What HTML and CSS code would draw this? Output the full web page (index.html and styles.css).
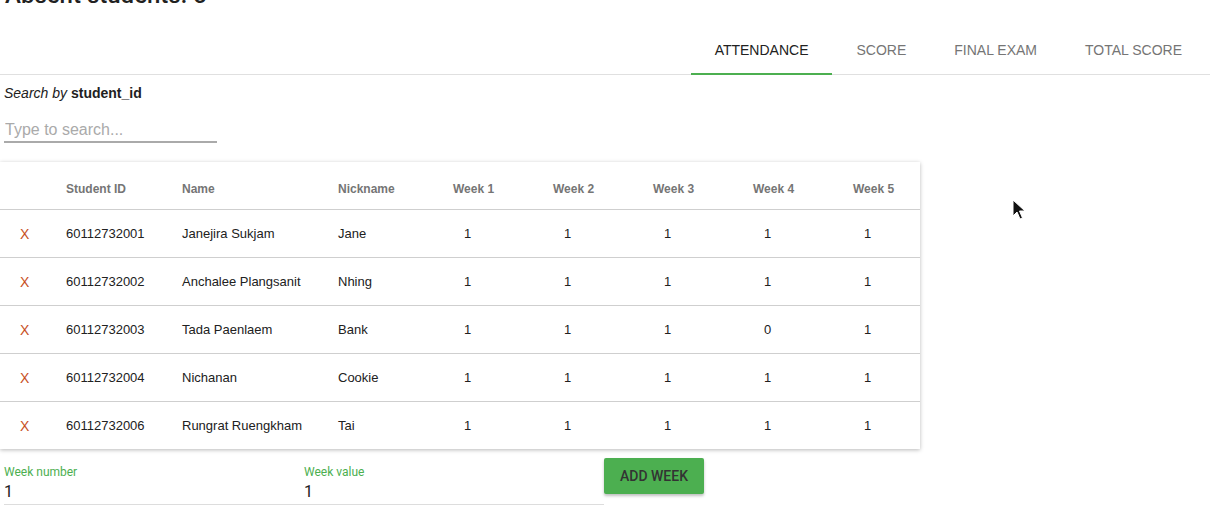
FILE: index.html
```html
<!DOCTYPE html>
<html>
<head>
<meta charset="utf-8">
<link rel="stylesheet" href="styles.css">
</head>
<body>
<h1 class="title">Absent students: 5</h1>
<nav class="tabs">
  <a class="tab active">Attendance</a>
  <a class="tab">Score</a>
  <a class="tab">Final exam</a>
  <a class="tab">Total score</a>
</nav>
<div class="search">
  <div class="search-label"><em>Search by</em> <strong>student_id</strong></div>
  <input class="search-input" type="text" placeholder="Type to search...">
</div>
<div class="card">
  <table class="grid">
    <colgroup>
      <col class="c-del"><col class="c-id"><col class="c-name"><col class="c-nick">
      <col class="c-wk"><col class="c-wk"><col class="c-wk"><col class="c-wk"><col class="c-wk5">
    </colgroup>
    <thead>
      <tr><th></th><th>Student ID</th><th>Name</th><th>Nickname</th><th class="wk">Week 1</th><th class="wk">Week 2</th><th class="wk">Week 3</th><th class="wk">Week 4</th><th class="wk">Week 5</th></tr>
    </thead>
    <tbody>
      <tr><td class="del">X</td><td>60112732001</td><td>Janejira Sukjam</td><td>Jane</td><td class="wk">1</td><td class="wk">1</td><td class="wk">1</td><td class="wk">1</td><td class="wk">1</td></tr>
      <tr><td class="del">X</td><td>60112732002</td><td>Anchalee Plangsanit</td><td>Nhing</td><td class="wk">1</td><td class="wk">1</td><td class="wk">1</td><td class="wk">1</td><td class="wk">1</td></tr>
      <tr><td class="del">X</td><td>60112732003</td><td>Tada Paenlaem</td><td>Bank</td><td class="wk">1</td><td class="wk">1</td><td class="wk">1</td><td class="wk">0</td><td class="wk">1</td></tr>
      <tr><td class="del">X</td><td>60112732004</td><td>Nichanan</td><td>Cookie</td><td class="wk">1</td><td class="wk">1</td><td class="wk">1</td><td class="wk">1</td><td class="wk">1</td></tr>
      <tr><td class="del">X</td><td>60112732006</td><td>Rungrat Ruengkham</td><td>Tai</td><td class="wk">1</td><td class="wk">1</td><td class="wk">1</td><td class="wk">1</td><td class="wk">1</td></tr>
    </tbody>
  </table>
</div>
<div class="form">
  <label class="field">
    <span class="field-label">Week number</span>
    <input class="field-input" type="text" value="1">
  </label>
  <label class="field">
    <span class="field-label">Week value</span>
    <input class="field-input" type="text" value="1">
  </label>
  <button class="btn">Add week</button>
</div>
<svg class="cursor" width="14" height="22" viewBox="0 0 14 22">
  <path d="M1 1 L1 17 L5 13 L8 20 L10.5 19 L7.5 12 L13 12 Z" fill="#111" stroke="#fff" stroke-width="1"/>
</svg>
</body>
</html>
```

FILE: styles.css
```css
html, body {
  margin: 0;
  padding: 0;
  background: #fff;
  font-family: "Liberation Sans", Arial, sans-serif;
  color: #212121;
  overflow: hidden;
}
body {
  position: relative;
  width: 1210px;
  height: 525px;
}
.title {
  margin: -21px 0 0 5px;
  font-family: Roboto, "Liberation Sans", sans-serif;
  font-weight: 500;
  font-size: 24px;
  line-height: 32px;
  height: 47px;
  color: #212121;
}
.tabs {
  display: flex;
  justify-content: flex-end;
  height: 48px;
  border-bottom: 1px solid #e0e0e0;
  padding-right: 4px;
}
.tab {
  display: flex;
  align-items: center;
  padding: 0 24px;
  font-size: 14px;
  text-transform: uppercase;
  color: #757575;
  cursor: pointer;
  border-bottom: 2px solid transparent;
  margin-bottom: -1px;
}
.tab.active {
  color: #212121;
  border-bottom-color: #4caf50;
}
.search {
  padding: 8px 0 0 4px;
}
.search-label {
  font-size: 14px;
  line-height: 20px;
}
.search-label strong { font-weight: 700; }
.search-input {
  display: block;
  margin-top: 16px;
  width: 213px;
  box-sizing: border-box;
  border: none;
  border-bottom: 2px solid #aaa;
  padding: 0 0 1px 1px;
  height: 24px;
  font-family: "Liberation Sans", Arial, sans-serif;
  font-size: 16px;
  outline: none;
}
.search-input::placeholder { color: #aaa; }
.card {
  margin-top: 19px;
  width: 920px;
  box-shadow: 0 1px 4px rgba(0,0,0,0.28);
  background: #fff;
}
.grid {
  width: 920px;
  border-collapse: collapse;
  table-layout: fixed;
}
.c-del { width: 50px; }
.c-id { width: 116px; }
.c-name { width: 156px; }
.c-nick { width: 103px; }
.c-wk { width: 100px; }
.c-wk5 { width: 95px; }
.grid th, .grid td {
  text-align: left;
  padding: 0 0 0 16px;
  height: 47px;
  border-bottom: 1px solid #cfcfcf;
}
.grid tbody tr:last-child td { border-bottom: none; }
.grid th {
  font-size: 12px;
  font-weight: 700;
  color: #757575;
  height: 41px;
  padding-top: 6px;
}
.grid td {
  font-size: 13px;
  color: #212121;
}
.grid th.wk { padding-left: 28px; }
.grid td.wk { padding-left: 39px; }
.grid td.del {
  padding-left: 20px;
  color: #c8501e;
  font-size: 14px;
}
.form {
  display: flex;
  align-items: flex-start;
  padding: 9px 0 0 4px;
}
.field {
  display: flex;
  flex-direction: column;
  width: 300px;
  border-bottom: 1px solid #ddd;
  font-family: Roboto, "Liberation Sans", sans-serif;
}
.field-label {
  margin-top: 8px;
  font-size: 12px;
  line-height: 13px;
  color: #4caf50;
}
.field-input {
  border: none;
  outline: none;
  padding: 0;
  height: 25px;
  font-family: Roboto, "Liberation Sans", sans-serif;
  font-size: 16px;
  color: #212121;
}
.btn {
  width: 100px;
  height: 36px;
  border: none;
  border-radius: 2px;
  background: #4caf50;
  color: #333;
  font-family: Roboto, "Liberation Sans", sans-serif;
  font-size: 14px;
  font-weight: 500;
  text-transform: uppercase;
  box-shadow: 0 2px 3px rgba(0,0,0,0.25);
  cursor: pointer;
}
.cursor {
  position: absolute;
  left: 1012px;
  top: 199px;
}
```
